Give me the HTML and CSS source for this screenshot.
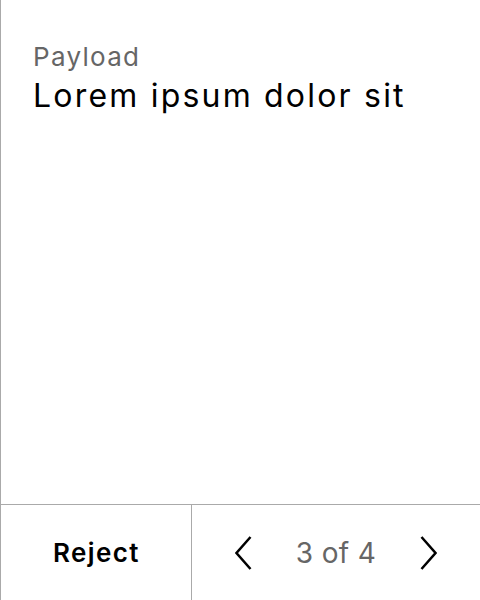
FILE: index.html
```html
<!DOCTYPE html>
<html>
<head>
<meta charset="utf-8">
<link rel="stylesheet" href="styles.css">
</head>
<body>
<div class="panel">
  <div class="content">
    <div class="label">Payload</div>
    <div class="title">Lorem ipsum dolor sit</div>
  </div>
  <div class="footer">
    <button class="reject">Reject</button>
    <div class="pager">
      <button class="nav" aria-label="Previous">
        <svg width="17" height="34" viewBox="0 0 17 34"><path d="M15.5 1 L1.5 17 L15.5 33" fill="none" stroke="#000" stroke-width="2.5"/></svg>
      </button>
      <span class="count">3 of 4</span>
      <button class="nav" aria-label="Next">
        <svg width="17" height="34" viewBox="0 0 17 34"><path d="M1.5 1 L15.5 17 L1.5 33" fill="none" stroke="#000" stroke-width="2.5"/></svg>
      </button>
    </div>
  </div>
</div>
</body>
</html>
```
FILE: styles.css
```css
html, body {
  margin: 0;
  padding: 0;
  background: #fff;
}
body {
  font-family: Inter, "Noto Sans", sans-serif;
}
.panel {
  box-sizing: border-box;
  width: 480px;
  height: 600px;
  border-left: 1px solid #aaa;
  display: flex;
  flex-direction: column;
}
.content {
  flex: 1;
  padding: 40px 32px 0 32px;
}
.label {
  font-size: 26px;
  line-height: 34px;
  letter-spacing: 1.3px;
  color: #666;
}
.title {
  font-size: 32px;
  line-height: 40px;
  letter-spacing: 2.2px;
  color: #000;
  margin-top: 2px;
}
.footer {
  box-sizing: border-box;
  height: 96px;
  border-top: 1px solid #aaa;
  display: flex;
}
.reject {
  width: 191px;
  border: none;
  border-right: 1px solid #aaa;
  background: none;
  font-family: inherit;
  font-size: 26px;
  font-weight: 600;
  letter-spacing: 1.4px;
  color: #000;
  padding: 0 0 0 1px;
}
.pager {
  flex: 1;
  display: flex;
  align-items: center;
  justify-content: center;
  gap: 44px;
}
.nav {
  border: none;
  background: none;
  padding: 0;
  display: flex;
}
.count {
  font-size: 28px;
  letter-spacing: 0.4px;
  color: #666;
}
```
